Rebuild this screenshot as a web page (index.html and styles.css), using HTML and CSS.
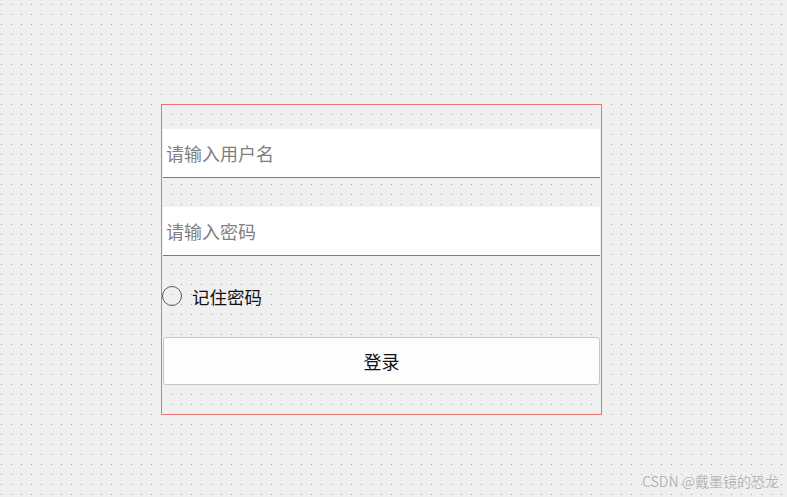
FILE: index.html
```html
<!DOCTYPE html>
<html lang="zh-CN">
<head>
  <meta charset="UTF-8" />
  <meta name="viewport" content="width=device-width, initial-scale=1.0" />
  <title>登录</title>
  <link rel="stylesheet" href="styles.css">
</head>
<body>
  <!-- 登录表单 -->
  <div class="login-box">
    <input class="field" type="text" placeholder="请输入用户名" />
    <input class="field" type="password" placeholder="请输入密码" />
    <label class="remember">
      <input type="radio" />
      <span>记住密码</span>
    </label>
    <button class="login-btn">登录</button>
  </div>

  <div class="watermark">CSDN @戴墨镜的恐龙</div>
</body>
</html>
```

FILE: styles.css
```css
* {
  box-sizing: border-box;
}

body {
  margin: 0;
  height: 100vh;
  position: relative;
  font-family: "Noto Sans CJK SC", "Noto Sans", sans-serif;
  background-color: #f0f0f0;
  background-image: url("data:image/svg+xml,%3Csvg xmlns='http://www.w3.org/2000/svg' width='10' height='10'%3E%3Crect x='1' y='4' width='1' height='1' fill='%23a4a4a4'/%3E%3C/svg%3E");
  background-size: 10px 10px;
  overflow: hidden;
}

.login-box {
  width: 441px;
  height: 311px;
  margin: 104px 0 0 161px;
  padding: 24px 1px 0 1px;
  border: 1px solid #e87474;
  display: flex;
  flex-direction: column;
}

.field {
  height: 49px;
  width: 100%;
  padding: 0 3px;
  border: none;
  border-bottom: 1px solid #7a7a7a;
  background: #fff;
  font-family: inherit;
  font-size: 18px;
  color: #222;
  outline: none;
}

.field::placeholder {
  color: #808080;
}

.field + .field {
  margin-top: 29px;
}

.remember {
  display: flex;
  align-items: center;
  gap: 10px;
  height: 20px;
  margin-top: 30px;
  margin-left: -1px;
  font-size: 17.5px;
  color: #111;
}

.remember input {
  appearance: none;
  margin: 0;
  width: 20px;
  height: 20px;
  border: 1.5px solid #5c5c5c;
  border-radius: 50%;
  background: transparent;
}

.login-btn {
  height: 48px;
  width: 100%;
  margin-top: 31px;
  background: #fdfdfd;
  border: 1px solid #c6c6c6;
  border-radius: 3px;
  font-family: inherit;
  font-size: 18px;
  color: #111;
  cursor: pointer;
}

.watermark {
  position: absolute;
  right: 8px;
  bottom: 6px;
  font-size: 14px;
  color: #b4b4b4;
  text-shadow: 0 0 1px #fff;
}
```
